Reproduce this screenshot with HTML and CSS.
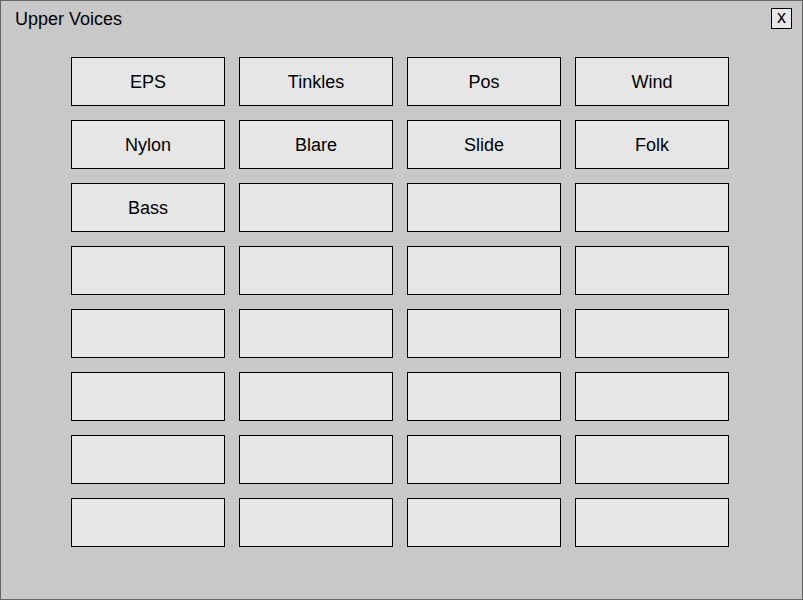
FILE: index.html
```html
<!DOCTYPE html>
<html>
<head>
<meta charset="utf-8">
<link rel="stylesheet" href="styles.css">
</head>
<body>
<div class="window">
  <div class="header">
    <div class="title">Upper Voices</div>
    <div class="close">x</div>
  </div>
  <div class="grid">
    <div class="btn">EPS</div>
    <div class="btn">Tinkles</div>
    <div class="btn">Pos</div>
    <div class="btn">Wind</div>
    <div class="btn">Nylon</div>
    <div class="btn">Blare</div>
    <div class="btn">Slide</div>
    <div class="btn">Folk</div>
    <div class="btn">Bass</div>
    <div class="btn"></div>
    <div class="btn"></div>
    <div class="btn"></div>
    <div class="btn"></div>
    <div class="btn"></div>
    <div class="btn"></div>
    <div class="btn"></div>
    <div class="btn"></div>
    <div class="btn"></div>
    <div class="btn"></div>
    <div class="btn"></div>
    <div class="btn"></div>
    <div class="btn"></div>
    <div class="btn"></div>
    <div class="btn"></div>
    <div class="btn"></div>
    <div class="btn"></div>
    <div class="btn"></div>
    <div class="btn"></div>
    <div class="btn"></div>
    <div class="btn"></div>
    <div class="btn"></div>
    <div class="btn"></div>
  </div>
</div>
</body>
</html>
```
FILE: styles.css
```css
html, body {
  margin: 0;
  padding: 0;
}
body {
  font-family: "Liberation Sans", Arial, sans-serif;
  color: #000;
}
.window {
  box-sizing: border-box;
  width: 803px;
  height: 600px;
  border: 1px solid #666666;
  background: #c8c8c8;
  overflow: hidden;
}
.header {
  display: flex;
  justify-content: space-between;
  align-items: flex-start;
  padding: 7px 10px 0 14px;
}
.title {
  font-size: 18px;
  line-height: 21px;
  padding-top: 1px;
}
.close {
  box-sizing: border-box;
  width: 21px;
  height: 21px;
  border: 1px solid #000;
  background: #e8e8e8;
  font-size: 18px;
  line-height: 17px;
  text-align: center;
}
.grid {
  display: grid;
  grid-template-columns: repeat(4, 154px);
  grid-auto-rows: 49px;
  gap: 14px;
  margin: 27px 0 0 70px;
}
.btn {
  box-sizing: border-box;
  border: 1px solid #000;
  background: #e6e6e6;
  display: flex;
  align-items: center;
  justify-content: center;
  font-size: 18px;
  padding-top: 2px;
}
```
